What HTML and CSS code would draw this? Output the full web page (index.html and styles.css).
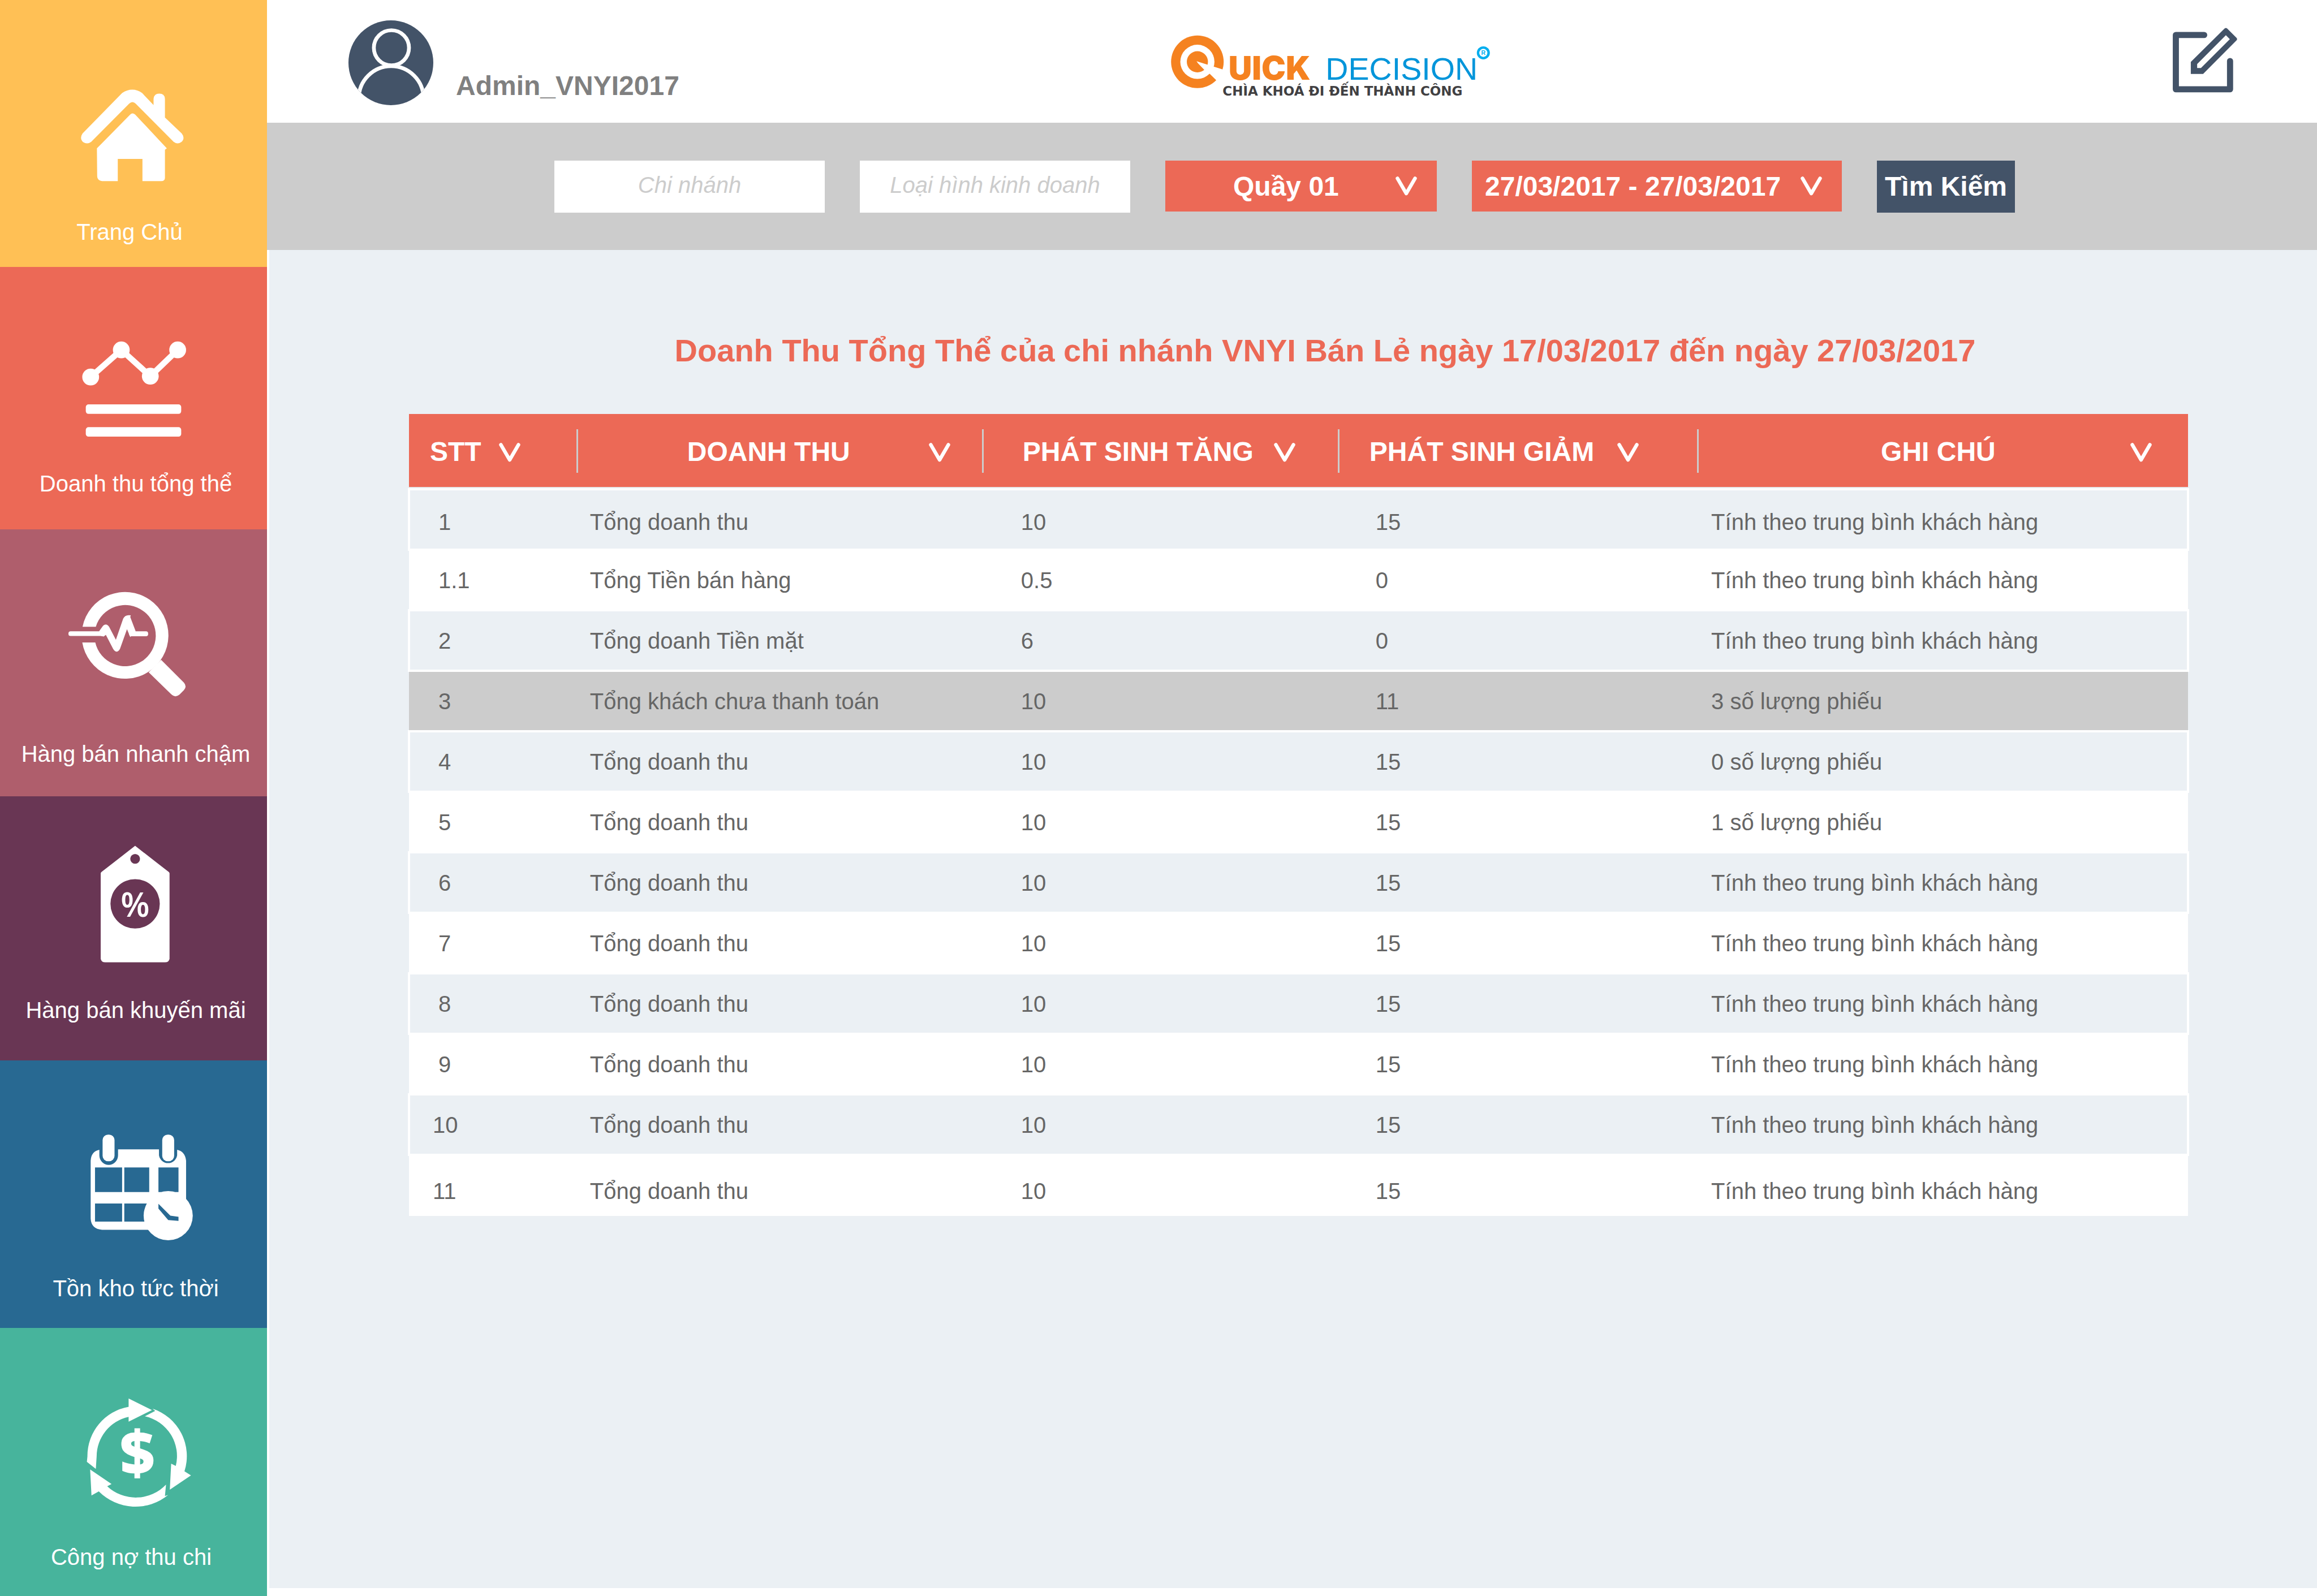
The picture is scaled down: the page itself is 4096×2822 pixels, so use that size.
FILE: index.html
```html
<!DOCTYPE html>
<html lang="vi">
<head>
<meta charset="utf-8">
<title>Quick Decision</title>
<link rel="stylesheet" href="styles.css">
</head>
<body>
<svg class="defs" aria-hidden="true">
  <symbol id="chevron" viewBox="0 0 39 35"><path d="M3.5 3.5 19.5 31 35.5 3.5" fill="none" stroke="#fff" stroke-width="6.5" stroke-linecap="round" stroke-linejoin="round"/></symbol>
</svg>
<div class="app">
  <nav class="sidebar">
    <a class="tile tile-home" href="#home">
      <svg class="tile-icon" viewBox="0 0 492 240" fill="#fff">
        <path d="M152 144 225 69.5Q244 57 262 69.5L283 91.5V80Q284 70.5 293.5 70.5 303.5 70.5 304 80V114.5L335 144Q342 153 334 160 327 165 320 159.5L250 89Q244 83 238 89L168 159.5Q161 165 153 160 146 153 152 144Z"/>
        <path d="M178.5 171.5 240 109Q244 105 249 109L307.5 171.5 304 174V226Q304 232 297 232H262.5V191H217V232H191Q179 232 179 222Z"/>
      </svg>
      <span class="tile-label">Trang Chủ</span>
    </a>
    <a class="tile tile-revenue" href="#revenue">
      <svg class="tile-icon" viewBox="0 0 492 240" fill="#fff">
        <path d="M167 129 223.5 79 277 127.5 327.5 79" fill="none" stroke="#fff" stroke-width="11"/>
        <circle cx="167" cy="129" r="15.5"/><circle cx="223.5" cy="79" r="15.5"/><circle cx="277" cy="127.5" r="15.5"/><circle cx="327.5" cy="79" r="15.5"/>
        <rect x="158" y="179.5" width="176" height="17.5" rx="5"/><rect x="158" y="221.5" width="176" height="17.5" rx="5"/>
      </svg>
      <span class="tile-label">Doanh thu tổng thể</span>
    </a>
    <a class="tile tile-speed" href="#speed">
      <svg class="tile-icon" viewBox="0 0 492 240" fill="#fff">
        <path d="M152 91A80 80 0 1 1 151.5 120H175.5A56.5 56.5 0 1 0 176.5 91Z"/>
        <path d="M297 152 339 194Q345 201 339 208L331 216Q323 223 315 215L274 175Z"/>
        <rect x="126" y="99.5" width="64" height="8.5" rx="4"/><rect x="238" y="99.5" width="35" height="9" rx="4"/>
        <path d="M182.5 99.5 190 89Q196 84 201 91L213.5 115 227 76Q231 68 241 70L240 73 250 99.5 240 110 234 95.5 221 132Q215 142 208.5 132L195 106 191 109 186 108Z"/>
      </svg>
      <span class="tile-label">Hàng bán nhanh chậm</span>
    </a>
    <a class="tile tile-promo" href="#promo">
      <svg class="tile-icon" viewBox="0 0 492 240" fill="#fff">
        <path fill-rule="evenodd" d="M185.5 73Q186 71 188 70L249 22.5 310 70Q312 71 312.5 73V231Q311 237.5 304 237.5H194Q187 237.5 185.5 231ZM240 46.5a9 9 0 1 0 18 0 9 9 0 1 0-18 0ZM203.5 129.5a45.5 45.5 0 1 0 91 0 45.5 45.5 0 1 0-91 0Z"/>
        <text class="glyph-percent" x="249" y="153" text-anchor="middle">%</text>
      </svg>
      <span class="tile-label">Hàng bán khuyến mãi</span>
    </a>
    <a class="tile tile-stock" href="#stock">
      <svg class="tile-icon" viewBox="0 0 492 240" fill="#fff">
        <path fill-rule="evenodd" d="M183 70V80A17 17.5 0 0 0 217.5 80V69H293V80A17 17.5 0 0 0 326.5 80V70Q341 73 343 90V217.5H188Q168 216 167 197V90Q168 73 183 70ZM175 102.5V148H225V102.5ZM229 102.5V148H275V102.5ZM292 102.5V148H329V102.5ZM175 169V202.5H225V169ZM229 169V202.5H275V169Z"/>
        <rect x="189" y="42" width="22" height="49" rx="10"/><rect x="299" y="42" width="22" height="49" rx="10"/>
        <circle cx="310" cy="191.5" r="45.3"/>
        <path fill="#286992" d="M292 169.5 314 191.5 329 193.5V201L310 199.5 292 178.5Z"/>
      </svg>
      <span class="tile-label">Tồn kho tức thời</span>
    </a>
    <a class="tile tile-debt" href="#debt">
      <svg class="tile-icon" viewBox="0 0 492 240" fill="#fff">
        <path d="M161 140A92 92 0 0 1 237 48.5V33L280 54.5 237 76V67A75 75 0 0 0 178 140L176.5 163 160 150Z"/>
        <path d="M281 52A92 92 0 0 1 340 167.5L352 175 313 201.5 315.5 153.5 324 157.5A75 75 0 0 0 267 66L286 56Z"/>
        <path d="M306 192 304 213 310 211A95 95 0 0 1 182 204.5L168.5 212 166 164 205.5 191 197.5 195A77 77 0 0 0 306 192Z"/>
        <text class="glyph-dollar" x="253" y="174" text-anchor="middle">$</text>
      </svg>
      <span class="tile-label">Công nợ thu chi</span>
    </a>
  </nav>

  <div class="main">
    <header class="topbar">
      <div class="profile">
        <svg class="avatar" viewBox="0 0 156 156">
          <clipPath id="disc"><circle cx="78" cy="78" r="78"/></clipPath>
          <circle cx="78" cy="78" r="78" fill="#435368"/>
          <g clip-path="url(#disc)" fill="none" stroke="#fff" stroke-width="7">
            <circle cx="79" cy="50.5" r="32.3"/><circle cx="78.5" cy="143.5" r="59.5"/>
          </g>
        </svg>
        <span class="username">Admin_VNYI2017</span>
      </div>
      <svg class="logo" viewBox="0 0 600 120" role="img" aria-label="Quick Decision">
        <circle cx="54.5" cy="53.5" r="48.5" fill="#f58220"/>
        <circle cx="54.5" cy="53.5" r="31.5" fill="#fff"/>
        <circle cx="54.5" cy="53.5" r="19.5" fill="#f58220"/>
        <path d="M53 52.5 106 69 98 96 77 75.5 67 68 55.5 56Z" fill="#fff"/>
        <text class="logo-quick" x="112" y="87">UICK</text>
        <text class="logo-decision" x="291" y="87">DECISION</text>
        <circle cx="582" cy="37" r="12" fill="#00aeef"/><circle cx="582" cy="37" r="7.5" fill="#fff"/>
        <text class="logo-mark" x="582" y="41" text-anchor="middle">R</text>
        <text class="logo-tagline" x="101" y="116">CHÌA KHOÁ ĐI ĐẾN THÀNH CÔNG</text>
      </svg>
      <button class="edit" type="button" aria-label="Chỉnh sửa">
        <svg viewBox="0 0 120 120">
          <path d="M58 13.5H5.7V113.6H105.7V61.5" fill="none" stroke="#435368" stroke-width="11.3" stroke-linecap="round" stroke-linejoin="round"/>
          <path fill="#435368" fill-rule="evenodd" d="M33.3 85.3V63L95.5 1.5Q98 -.5 100.5 1.5L118 19Q119.5 21 118 23L56 85.3ZM45 74.3H52L105.3 21 98 13.7 45 67Z"/>
        </svg>
      </button>
    </header>

    <form class="filters">
      <input class="field" type="text" placeholder="Chi nhánh" aria-label="Chi nhánh">
      <input class="field" type="text" placeholder="Loại hình kinh doanh" aria-label="Loại hình kinh doanh">
      <div class="picker picker-counter">
        <select aria-label="Quầy"><option>Quầy 01</option></select>
        <svg class="chevron"><use href="#chevron"/></svg>
      </div>
      <div class="picker picker-dates">
        <select aria-label="Khoảng ngày"><option>27/03/2017 - 27/03/2017</option></select>
        <svg class="chevron"><use href="#chevron"/></svg>
      </div>
      <button class="search" type="button">Tìm Kiếm</button>
    </form>

    <main class="content">
      <h1 class="title">Doanh Thu Tổng Thể của chi nhánh VNYI Bán Lẻ ngày 17/03/2017 đến ngày 27/03/2017</h1>
      <table class="report">
        <colgroup><col class="col-no"><col class="col-name"><col class="col-up"><col class="col-down"><col class="col-note"></colgroup>
        <thead>
          <tr>
            <th class="h-no"><button type="button">STT<svg class="chevron"><use href="#chevron"/></svg></button></th>
            <th class="h-name"><button type="button">DOANH THU<svg class="chevron"><use href="#chevron"/></svg></button></th>
            <th class="h-up"><button type="button">PHÁT SINH TĂNG<svg class="chevron"><use href="#chevron"/></svg></button></th>
            <th class="h-down"><button type="button">PHÁT SINH GIẢM<svg class="chevron"><use href="#chevron"/></svg></button></th>
            <th class="h-note"><button type="button">GHI CHÚ<svg class="chevron"><use href="#chevron"/></svg></button></th>
          </tr>
        </thead>
        <tbody>
          <tr><td>1</td><td>Tổng doanh thu</td><td>10</td><td>15</td><td>Tính theo trung bình khách hàng</td></tr>
          <tr><td>1.1</td><td>Tổng Tiền bán hàng</td><td>0.5</td><td>0</td><td>Tính theo trung bình khách hàng</td></tr>
          <tr><td>2</td><td>Tổng doanh Tiền mặt</td><td>6</td><td>0</td><td>Tính theo trung bình khách hàng</td></tr>
          <tr class="selected"><td>3</td><td>Tổng khách chưa thanh toán</td><td>10</td><td>11</td><td>3 số lượng phiếu</td></tr>
          <tr><td>4</td><td>Tổng doanh thu</td><td>10</td><td>15</td><td>0 số lượng phiếu</td></tr>
          <tr><td>5</td><td>Tổng doanh thu</td><td>10</td><td>15</td><td>1 số lượng phiếu</td></tr>
          <tr><td>6</td><td>Tổng doanh thu</td><td>10</td><td>15</td><td>Tính theo trung bình khách hàng</td></tr>
          <tr><td>7</td><td>Tổng doanh thu</td><td>10</td><td>15</td><td>Tính theo trung bình khách hàng</td></tr>
          <tr><td>8</td><td>Tổng doanh thu</td><td>10</td><td>15</td><td>Tính theo trung bình khách hàng</td></tr>
          <tr><td>9</td><td>Tổng doanh thu</td><td>10</td><td>15</td><td>Tính theo trung bình khách hàng</td></tr>
          <tr><td class="wide-no">10</td><td>Tổng doanh thu</td><td>10</td><td>15</td><td>Tính theo trung bình khách hàng</td></tr>
          <tr><td class="wide-no">11</td><td>Tổng doanh thu</td><td>10</td><td>15</td><td>Tính theo trung bình khách hàng</td></tr>
        </tbody>
      </table>
    </main>
  </div>
</div>
</body>
</html>
```
FILE: styles.css
```css
* { box-sizing: border-box; }

body {
  margin: 0;
  background: #fff;
  color: #666;
  font: 40px/48px "Liberation Sans", Arial, sans-serif;
}

button, input, select { font: inherit; color: inherit; border: 0; border-radius: 0; margin: 0; padding: 0; background: none; }
svg { display: block; }
.defs { position: absolute; width: 0; height: 0; }

.app { display: grid; grid-template-columns: 472px 1fr; min-height: 100vh; }

/* Sidebar */
.sidebar { display: grid; grid-template-rows: 472fr 464fr 472fr 467fr 473fr 474fr; }
.tile {
  display: flex; flex-direction: column; justify-content: flex-end; gap: 58px;
  color: #fff; text-decoration: none; text-align: center;
}
.tile-icon { width: 100%; height: 230px; }
.tile-label { padding-left: 8px; white-space: nowrap; }
.tile-home { background: #ffc055; padding-bottom: 38px; }
.tile-home .tile-label { padding: 0 14px 0 0; }
.tile-revenue { background: #ec6956; padding-bottom: 57px; }
.tile-speed { background: #af5e6c; padding-bottom: 51px; }
.tile-promo { background: #693654; padding-bottom: 65px; }
.tile-stock { background: #286992; padding-bottom: 46px; }
.tile-debt { background: #47b49c; padding-bottom: 45px; }
.tile-debt .tile-label { padding: 0 8px 0 0; }
.glyph-percent { font: 600 62px "Open Sans", sans-serif; }
.glyph-dollar { font: 800 112px "Open Sans", sans-serif; }

.main { display: flex; flex-direction: column; }

/* Top bar */
.topbar {
  display: grid; grid-template-columns: 1448fr 576px 1316fr;
  height: 217px; padding: 0 140px 0 144px;
}
.profile { display: flex; align-items: flex-start; gap: 40px; padding-top: 36px; }
.avatar { width: 150px; height: 150px; }
.username { margin-top: 88px; font-size: 48px; line-height: 56px; font-weight: bold; color: #808080; }
.logo { width: 576px; height: 115px; margin-top: 58px; overflow: visible; }
.logo-quick { font: 900 60px Inter, sans-serif; fill: #f58220; }
.logo-decision { font: 58px "Liberation Sans", Arial, sans-serif; fill: #0095da; }
.logo-mark { font: bold 11px "Liberation Sans", Arial, sans-serif; fill: #00aeef; }
.logo-tagline { font: bold 24px "DejaVu Sans", sans-serif; fill: #414042; }
.edit { justify-self: end; align-self: start; width: 115px; height: 115px; margin-top: 49px; }
.edit svg { width: 100%; height: 100%; overflow: visible; }

/* Filters */
.filters {
  display: flex; justify-content: center; align-items: flex-start; gap: 62px;
  height: 225px; padding: 67px 26px 0 0; background: #ccc;
}
.field { width: 478px; height: 92px; padding-bottom: 6px; background: #fff; font-style: italic; text-align: center; }
.field::placeholder { color: #ccc; opacity: 1; }
.picker { position: relative; height: 90px; background: #ec6956; color: #fff; font-size: 48px; line-height: 56px; font-weight: bold; }
.picker select { appearance: none; width: 100%; height: 100%; padding-top: 2px; }
.picker-counter { width: 480px; }
.picker-counter select { padding-left: 120px; }
.picker-dates { width: 654px; }
.picker-dates select { padding-left: 23px; }
.picker .chevron { position: absolute; right: 35px; top: 28px; pointer-events: none; }
.chevron { width: 38px; height: 34px; flex: none; }
.search { width: 244px; height: 92px; background: #435368; color: #fff; font-size: 48px; line-height: 56px; font-weight: bold; }

/* Report */
.content { flex: 1; margin: 0 0 14px 4px; padding: 146px 228px 0 247px; background: #ebf0f4; }
.title { margin: 0 0 80px; padding-left: 94px; text-align: center; font-size: 56px; line-height: 64px; color: #ec6956; }
.report { width: 100%; table-layout: fixed; border-spacing: 0; }
.col-no { width: 9.5%; }
.col-name { width: 22.8%; }
.col-up { width: 20%; }
.col-down { width: 20.2%; }
.col-note { width: 27.5%; }

th { height: 131px; padding: 2px 0 0; background: #ec6956; border-bottom: 2px solid #e6e8ea; color: #fff; }
th button {
  display: flex; align-items: center; justify-content: space-between; width: 100%; height: 77px;
  padding-top: 2px; border-right: 3px solid #ccc; font-size: 48px; line-height: 56px; font-weight: bold;
}
th .chevron { margin-top: 3px; }
.h-no button { padding-left: 37px; padding-right: 99px; }
.h-name button { padding-left: 193px; padding-right: 56px; }
.h-up button { padding-left: 69px; padding-right: 75px; }
.h-down button { padding-left: 53px; padding-right: 103px; }
.h-note button { padding-left: 322px; padding-right: 64px; border-right: 0; }

td { height: 103px; padding: 0 0 0 21px; background: #fff; }
td:nth-child(1) { padding-left: 52px; }
td:nth-child(3) { padding-left: 66px; }
td:nth-child(4) { padding-left: 64px; }
td:nth-child(5) { padding-left: 22px; }
td.wide-no { padding-left: 42px; }
tbody tr:nth-child(odd) { box-shadow: -2px 0 #fff, 2px 0 #fff; }
tbody tr:nth-child(odd) td { height: 111px; background: #ebf0f4; border: solid #fff; border-width: 4px 0; }
tbody tr:nth-child(odd) td:first-child { border-left-width: 2px; padding-left: 50px; }
tbody tr:nth-child(odd) td.wide-no { padding-left: 40px; }
tbody tr:nth-child(odd) td:last-child { border-right-width: 2px; }
tbody tr:first-child td { padding-top: 8px; }
tbody tr:last-child td { height: 106px; padding-top: 18px; }
.selected td { background: #ccc; }
```
